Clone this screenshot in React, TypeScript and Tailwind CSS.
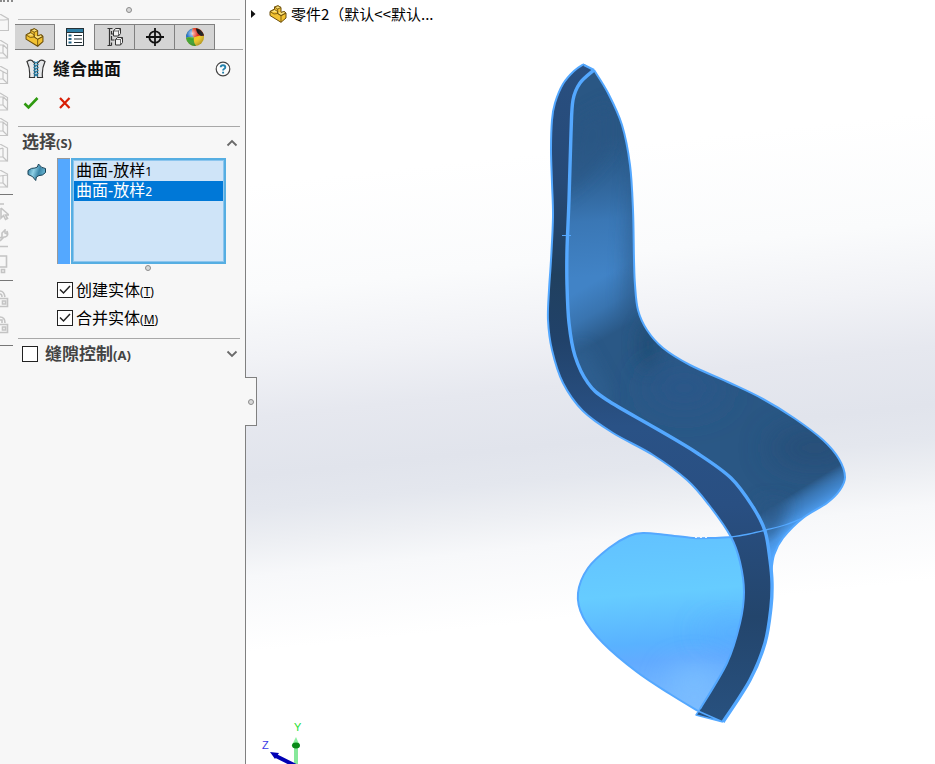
// The part window with the Knit Surface property manager docked on the left:
// clipped view toolbar, property panel, and the 3D graphics area with the chair shell.

import { useState, type ReactNode } from 'react';
import clsx from 'clsx';

type Pt = [number, number];

const ui = "font-['Noto_Sans','Noto_Sans_CJK_SC',sans-serif]";

// Catmull-Rom through the points, written as cubic segments. `join` continues an open path.
function spline(pts: Pt[], join = false) {
  let d = `${join ? 'L' : 'M'}${pts[0][0]} ${pts[0][1]}`;
  for (let i = 0; i < pts.length - 1; i++) {
    const p0 = pts[i - 1] ?? pts[i];
    const p1 = pts[i];
    const p2 = pts[i + 1];
    const p3 = pts[i + 2] ?? p2;
    d += `C${p1[0] + (p2[0] - p0[0]) / 6} ${p1[1] + (p2[1] - p0[1]) / 6} ${p2[0] - (p3[0] - p1[0]) / 6} ${p2[1] - (p3[1] - p1[1]) / 6} ${p2[0]} ${p2[1]}`;
  }
  return d;
}

// Edges of the model, top to bottom
const OUTER: Pt[] = [
  [584, 64], [574, 71], [563, 84], [555, 103], [552, 120], [551, 150], [552, 183], [553, 217], [551, 260], [549, 290],
  [548, 320], [552, 350], [563, 383], [583, 411], [613, 433], [653, 455], [687, 480], [709, 505], [731, 537],
  [740, 562], [744, 592], [740, 623], [727, 663], [700, 709],
];
const INNER: Pt[] = [
  [594, 70], [580, 83], [573, 100], [571, 133], [569, 200], [567, 250], [567, 285], [569, 323], [575, 356], [588, 383],
  [607, 400], [657, 429], [697, 453], [731, 478], [753, 507], [765, 531], [770, 560], [772, 583], [771, 607],
  [765, 643], [750, 680], [723, 722],
];
const BACK: Pt[] = [
  [594, 70], [608, 93], [622, 125], [630, 165], [633, 210], [634, 260], [635, 285], [638, 310], [647, 330], [663, 348],
  [690, 365], [730, 383], [763, 399], [794, 418], [823, 440], [839, 459], [845, 477], [840, 490], [827, 503],
  [803, 518], [783, 538], [774, 555], [771, 575],
];
const LEAF: Pt[] = [
  [732, 537], [713, 538], [693, 538], [667, 535], [643, 533], [629, 536], [609, 548], [588, 568], [578, 593], [583, 617],
  [603, 643], [637, 672], [670, 694], [698, 711],
];

const bandPath = `${spline(OUTER)}L696 715L723 722${spline([...INNER].reverse(), true)}Z`;
const shellPath = `${spline(BACK)}${spline(INNER.slice(0, 18).reverse(), true)}Z`;
const leafPath = `${spline(LEAF)}${spline(OUTER.slice(18).reverse(), true)}Z`;

function PartIcon({ className }: { className?: string }) {
  return (
    <svg viewBox="0 0 18 18" className={className} aria-hidden="true" strokeLinejoin="round" stroke="#6b4d08">
      <path d="M1 6.500 5.500 4 5.500 2 9 .8 12 2.500v5l3.500-1L17 8v5l-5 4.300L1 10.500Z" fill="#f2c232" />
      <path d="M5.500 2 9 .8 12 2.500 8.700 4Z M1 6.500 5.500 4.500 8.700 6.500v2L12 10.500l5-2.500-2-1.500-3 1" fill="#fbe27c" strokeWidth=".8" />
      <path d="M8.700 4v4.500L12 10.800v6.500M1 6.500l4 2.500 3.700-.5M12 10.800 17 8" fill="none" strokeWidth=".8" />
    </svg>
  );
}

function PropertyIcon() {
  return (
    <svg viewBox="0 0 18 18" className="size-[18px]" aria-hidden="true">
      <rect x=".5" y=".5" width="17" height="17" fill="#fff" stroke="#263238" />
      <rect x="1" y="1" width="16" height="3" fill="#2f7fa5" />
      <path d="M1 4.500h16" stroke="#263238" />
      <path d="M2.500 7.500h3M2.500 11h3M2.500 14.500h3" stroke="#1f5f80" strokeWidth="2" />
      <path d="M8 7.500h8M8 11h8M8 14.500h8" stroke="#263238" strokeWidth="1.200" />
    </svg>
  );
}

function ConfigIcon() {
  return (
    <svg viewBox="0 0 18 20" className="h-5 w-[18px]" fill="#f2f2f2" stroke="#333" aria-hidden="true">
      <path d="M1.500 1.500h5M3.500 1.500v17M1.500 18.500h4M5.500 4v3h4M5.500 9v4h3M5.500 15.500v3" fill="none" strokeWidth="1.200" />
      <path d="M7.500 4 9.500 1.500h5v5l-2 2.500h-5Z" />
      <path d="M9.500 12.500 11.500 10.500h5v5l-2 2.500h-5Z" />
      <path d="M7.500 4h5v5M12.500 4l2-2.500M9.500 12.500h5v5.500M14.500 12.500l2-2" fill="none" strokeWidth=".7" />
    </svg>
  );
}

function TargetIcon() {
  return (
    <svg viewBox="0 0 18 18" className="size-[18px]" fill="none" stroke="#111" strokeWidth="1.800" aria-hidden="true">
      <circle cx="9" cy="9" r="5.700" />
      <path d="M9 0v18M0 9h18" />
    </svg>
  );
}

function AppearanceIcon() {
  return (
    <svg viewBox="0 0 20 20" className="size-5" aria-hidden="true">
      <defs>
        <radialGradient id="ballShine" cx=".35" cy=".3" r=".8">
          <stop offset="0" stopColor="#fff" stopOpacity=".75" />
          <stop offset=".4" stopColor="#fff" stopOpacity="0" />
          <stop offset="1" stopColor="#000" stopOpacity=".35" />
        </radialGradient>
      </defs>
      <circle cx="10" cy="10" r="9" fill="#f0c81e" />
      <path d="M1 11A9 9 0 0 1 8 1.200Q5.500 6 9 10.500Q5 9.500 1 11Z" fill="#2270c8" />
      <path d="M8 1.200A9 9 0 0 1 19 9Q13 8 9 10.500Q5.500 6 8 1.200Z" fill="#e03222" />
      <path d="M11 1.200Q17 2 19 8.500L16 9Q11 6 11 1.200Z" fill="#151515" />
      <path d="M1 11Q5 9.500 9 10.500Q8 15 11 19A9 9 0 0 1 1 11Z" fill="#3aa32c" />
      <circle cx="10" cy="10" r="9" fill="url(#ballShine)" />
    </svg>
  );
}

function KnitIcon() {
  return (
    <svg viewBox="0 0 20 20" className="size-5" aria-hidden="true">
      <path d="M1 2.500Q4 .5 6 1.500L8.500 4v14.500H3.500Q4.500 10 1 2.500ZM19 2.500Q16 .5 14 1.500L11.500 4v14.500h5Q15.500 10 19 2.500Z" fill="#e6e8ea" stroke="#333" strokeWidth="1.200" />
      <path d="M8 2.500 12 5.500 8 8.500l4 3-4 3 4 3M12 2.500 8 5.500l4 3-4 3 4 3-4 3" fill="none" stroke="#2b83ab" strokeWidth="1.100" />
    </svg>
  );
}

function SurfaceIcon() {
  return (
    <svg viewBox="0 0 20 20" className="size-5" aria-hidden="true">
      <defs>
        <linearGradient id="sheet" x1="0" y1=".2" x2="1" y2=".5">
          <stop offset="0" stopColor="#2f7d9f" />
          <stop offset=".35" stopColor="#8fd0e6" />
          <stop offset=".65" stopColor="#3a86a8" />
          <stop offset="1" stopColor="#6db8d4" />
        </linearGradient>
      </defs>
      <path d="M1 8.500Q4.500 5.500 8 6 11 6 11.500 2 14.500 6.500 18.500 6.500V10.500Q15.500 14 12 13.500 8.500 14 8.700 18.500 6 13.500 1 12.500Z" fill="url(#sheet)" stroke="#143f55" strokeLinejoin="round" />
    </svg>
  );
}

function Chevron({ up = false }: { up?: boolean }) {
  return (
    <svg viewBox="0 0 12 8" className="h-2 w-3" fill="none" stroke="#6a6a6a" strokeWidth="1.800" aria-hidden="true">
      <path d={up ? 'M1.500 6.500 6 2l4.500 4.500' : 'M1.500 1.500 6 6l4.500-4.500'} />
    </svg>
  );
}

function Grip() {
  return <span className="block size-[6px] rounded-full border border-[#8c8c8c] bg-[#d8d8d8]" />;
}

const CUBES = [
  'M-6 6 0 0 8.500 5v11.500H-6M-6 6h10M8 5.500 4 6',
  'M-6 5H3.500L7.500 9v9H-6M0 0l7.500 4.500V9M0 0-6 5M3 5v8H-6M3 13l4.500 4.500',
  'M-6 4H0l7.500 4v9.500H-6M0 0l7.500 4V9M3 6v7H-6M3 13l4.500 4.500',
  'M-6 5H3.500L7.500 9v9H-6M0 1l7.500 4.500V9M3 5v8H-6M3 13l4.500 4.500',
  'M-6 4H3l4.500 4v9.500H-6M0 0l7.500 4.500V9M3 4v9H-6M3 13l4.500 4.500',
  'M0 0 7.500 4v13H-6M3 4v9H-6M3 13l4.500 4.500M0 5l3-1',
  'M0 0 7.500 4v13H-6M3 6v7H-6M3 13l4.500 4.500M0 6 7 5',
];

const TOOLS = [
  'M0 1h4M1 5v10l2.500-2.500 2 4 2-1-2-3.500h3.500L1 5',
  'M0 9l2-1V4l3-3v3l2 1V2q2 5-2 6H4L0 12M0 17.500h8',
  'M0 1h6.500v11H0M1.500 14.500h3v3h-3Z',
];
const LOCKS = ['M0 1q4 0 5 6M0 4q2 0 2 3M0 8.500h7.500v8H0M2.500 11h3v3h-3Z', 'M0 1q5 0 5 6M0 4h2v3M0 8.500h7.500v8H0M2.500 11h3v3h-3Z'];

function StripButton({ d, label, bold }: { d: string; label: string; bold?: boolean }) {
  return (
    <button type="button" aria-label={label} className="flex h-[26px] w-full items-center">
      <svg viewBox="0 0 9 19" className="h-[19px] w-[9px]" fill="none" stroke="#c4c4c4" strokeWidth={bold ? 1.6 : 1.2} aria-hidden="true">
        <path d={d} />
      </svg>
    </button>
  );
}

function ToolStrip() {
  return (
    <nav aria-label="视图" className="flex w-[15px] shrink-0 flex-col overflow-hidden bg-[#f7f7f7]">
      <div className="mb-2 h-[2px] w-[13px] border-t-2 border-dotted border-[#8a8a8a]" />
      {CUBES.map((d, i) => <StripButton key={i} d={d} label={`视图 ${i + 1}`} />)}
      <hr className="mt-0.5 mb-1 w-[13px] border-[#777]" />
      {TOOLS.map((d, i) => <StripButton key={i} d={d} label={`工具 ${i + 1}`} bold />)}
      <hr className="mt-[3px] mb-[5px] w-[13px] border-[#777]" />
      {LOCKS.map((d, i) => <StripButton key={i} d={d} label={`锁定 ${i + 1}`} bold />)}
      <hr className="mt-[7px] w-[13px] border-[#777]" />
    </nav>
  );
}

function CheckBox({ id, defaultChecked }: { id: string; defaultChecked?: boolean }) {
  return (
    <span className="grid size-4 shrink-0">
      <input id={id} type="checkbox" defaultChecked={defaultChecked}
        className="peer col-start-1 row-start-1 size-4 appearance-none border border-[#222] bg-white" />
      <svg viewBox="0 0 16 16" className="pointer-events-none invisible col-start-1 row-start-1 size-4 peer-checked:visible" fill="none" stroke="#222" strokeWidth="1.500" aria-hidden="true">
        <path d="M3 7.500 6.500 11l6.500-7" />
      </svg>
    </span>
  );
}

function Option({ id, text, children }: { id: string; text: string; children: ReactNode }) {
  return (
    <div className="flex h-7 items-center gap-[3px]">
      <CheckBox id={id} defaultChecked />
      <label htmlFor={id} className="text-base leading-6 text-black">
        {text}<span className="text-xs">({children})</span>
      </label>
    </div>
  );
}

const TABS = [
  { label: '设计树', icon: <PartIcon className="size-[19px]" /> },
  { label: '属性', icon: <PropertyIcon /> },
  { label: '配置', icon: <ConfigIcon /> },
  { label: '尺寸专家', icon: <TargetIcon /> },
  { label: '外观', icon: <AppearanceIcon /> },
];

const SURFACES = ['1', '2'];

function PropertyPanel() {
  const [tab, setTab] = useState(1);
  const [picked, setPicked] = useState(1);

  return (
    <aside className={clsx('flex w-[231px] shrink-0 flex-col border-r border-[#808080] bg-[#f7f7f7]', ui)}>
      <div className="mr-[5px] ml-[3px] flex h-5 items-center justify-center border-b border-[#bcbcbc]"><Grip /></div>

      <div role="tablist" className="mt-1 mr-0.5 flex h-[26px]">
        {TABS.map((t, i) => (
          <button key={t.label} type="button" role="tab" aria-label={t.label} aria-selected={i === tab} onClick={() => setTab(i)}
            className={clsx('flex w-10 items-center justify-center border-r border-[#808080]', i !== tab && 'border-y bg-[#d4d4d4]')}>
            {t.icon}
          </button>
        ))}
        <span className="flex-1 border-b border-[#a6a6a6]" />
      </div>

      <div className="mt-[5px] flex h-7 items-center pr-[14px] pl-[11px]">
        <KnitIcon />
        <h1 className="ml-[7px] flex-1 text-[17px] leading-6 font-bold text-[#111]">缝合曲面</h1>
        <button type="button" aria-label="帮助">
          <svg viewBox="0 0 16 16" className="size-4" fill="none" aria-hidden="true">
            <circle cx="8" cy="8" r="6.800" fill="#fdfdfd" stroke="#444" strokeWidth="1.200" />
            <path d="M5.700 6.300Q5.700 4.200 8 4.200T10.300 6.200Q10.300 7.300 9 8Q8.100 8.500 8.100 9.600M8.100 10.700v1.800" stroke="#2380ab" strokeWidth="1.900" />
          </svg>
        </button>
      </div>

      <div className="mb-1 flex h-[39px] items-center gap-[19px] pl-2">
        <button type="button" aria-label="确定">
          <svg viewBox="0 0 16 14" className="h-3.5 w-4" fill="none" aria-hidden="true">
            <path d="M1.500 7.500 5.500 11.500 14.500 2" stroke="#2f9a10" strokeWidth="2.600" />
          </svg>
        </button>
        <button type="button" aria-label="取消">
          <svg viewBox="0 0 14 14" className="size-3.5" fill="none" aria-hidden="true">
            <path d="M2 2l9.500 10M11.500 2 2 12" stroke="#d81e05" strokeWidth="2.200" />
          </svg>
        </button>
      </div>

      <section className="mr-[5px] ml-[3px] border-t border-[#a8a8a8] pt-0.5">
        <div className="mb-0.5 flex h-[27px] items-center pr-[2px] pl-1">
          <h2 className="flex-1 text-[17px] leading-6 font-bold text-[#444]">选择<span className="text-[13px]">(S)</span></h2>
          <button type="button" aria-label="折叠选择"><Chevron up /></button>
        </div>
        <div className="flex pr-[14px] pl-[9px]">
          <div className="mt-1 w-[30px] shrink-0"><SurfaceIcon /></div>
          <div className="mr-px h-[106px] w-[13px] shrink-0 border-t border-l border-[#999] bg-[#54a8ff]" />
          <ul role="listbox" aria-label="选择" className="h-[106px] min-w-0 flex-1 border-2 border-[#56aee2] bg-[#cfe4f8] py-px outline -outline-offset-3 outline-[#8cc5ee]">
            {SURFACES.map((n, i) => (
              <li key={n} role="option" aria-selected={i === picked} onClick={() => setPicked(i)}
                className={clsx('mx-px h-5 pl-[2px] text-base leading-[18px] whitespace-nowrap', i === picked ? 'bg-[#0078d7] text-white' : 'text-black')}>
                曲面-放样<span className="text-xs">{n}</span>
              </li>
            ))}
          </ul>
        </div>
        <div className="flex h-3 items-start justify-center pt-px pl-[38px]"><Grip /></div>
        <div className="pl-[39px]">
          <Option id="solid" text="创建实体"><u>T</u></Option>
          <Option id="merge" text="合并实体"><u>M</u></Option>
        </div>
      </section>

      <section className="mt-1.5 mr-[5px] ml-[3px] flex h-[31px] items-center border-t border-[#a8a8a8] pr-[2px] pl-1">
        <CheckBox id="gap" />
        <label htmlFor="gap" className="ml-[7px] flex-1 text-[17px] leading-6 font-bold text-[#444]">缝隙控制<span className="text-[13px]">(A)</span></label>
        <button type="button" aria-label="展开缝隙控制"><Chevron /></button>
      </section>
    </aside>
  );
}

function ChairModel() {
  return (
    <svg viewBox="246 32 689 732" className="block w-full" role="img" aria-label="零件2">
      <defs>
        <clipPath id="shellClip"><path d={shellPath} /></clipPath>
        <clipPath id="leafClip"><path d={leafPath} /></clipPath>
        <filter id="soft8" x="-60%" y="-60%" width="220%" height="220%"><feGaussianBlur stdDeviation="8" /></filter>
        <filter id="soft16" x="-100%" y="-150%" width="300%" height="400%"><feGaussianBlur stdDeviation="16" /></filter>
        <linearGradient id="band" gradientUnits="userSpaceOnUse" x1="0" y1="64" x2="0" y2="722">
          <stop offset="0" stopColor="#294f80" />
          <stop offset=".18" stopColor="#264a78" />
          <stop offset=".32" stopColor="#20405f" />
          <stop offset=".42" stopColor="#21426a" />
          <stop offset=".55" stopColor="#2a5286" />
          <stop offset=".67" stopColor="#294f82" />
          <stop offset=".84" stopColor="#23456c" />
          <stop offset="1" stopColor="#28517f" />
        </linearGradient>
        <linearGradient id="backrest" gradientUnits="userSpaceOnUse" x1="590" y1="138" x2="604" y2="275">
          <stop offset="0" stopColor="#2f669a" stopOpacity="0" />
          <stop offset=".25" stopColor="#30659a" stopOpacity=".7" />
          <stop offset=".6" stopColor="#3a77b5" />
          <stop offset="1" stopColor="#4183c6" />
        </linearGradient>
        <linearGradient id="backFold" gradientUnits="userSpaceOnUse" x1="580" y1="290" x2="607" y2="337">
          <stop offset="0" stopColor="#2a5886" stopOpacity="0" />
          <stop offset=".5" stopColor="#2a5886" stopOpacity=".35" />
          <stop offset="1" stopColor="#2a5886" />
        </linearGradient>
        <linearGradient id="lip" gradientUnits="userSpaceOnUse" x1="792" y1="494" x2="808" y2="520">
          <stop offset="0" stopColor="#54a8ff" stopOpacity="0" />
          <stop offset=".5" stopColor="#4792e0" stopOpacity=".7" />
          <stop offset="1" stopColor="#54a8ff" />
        </linearGradient>
        <linearGradient id="leaf" gradientUnits="userSpaceOnUse" x1="650" y1="533" x2="665" y2="715">
          <stop offset="0" stopColor="#62c2ff" />
          <stop offset=".33" stopColor="#66ccff" />
          <stop offset=".6" stopColor="#59b2ff" />
          <stop offset=".7" stopColor="#62abff" />
          <stop offset="1" stopColor="#7cbcff" />
        </linearGradient>
      </defs>

      {/* Lower leaf surface */}
      <path d={leafPath} fill="url(#leaf)" />
      <g clipPath="url(#leafClip)">
        <ellipse cx="735" cy="632" rx="34" ry="8" fill="#54a8ff" opacity=".7" filter="url(#soft16)" />
        <ellipse cx="694" cy="682" rx="26" ry="14" fill="#88caff" opacity=".7" filter="url(#soft16)" />
      </g>

      {/* Backrest and seat */}
      <path d={shellPath} fill="#2a5784" />
      <g clipPath="url(#shellClip)">
        <rect x="540" y="130" width="120" height="240" fill="url(#backrest)" />
        <path d="M575 120 560 200 590 175 612 150V100Z" fill="#2a5784" opacity=".7" filter="url(#soft8)" />
        <path d="M632 150Q624 240 622 320L660 330V150Z" fill="#2a5784" opacity=".5" filter="url(#soft8)" />
        <path d="M540 313 540 380V480H720V200L640 255Z" fill="url(#backFold)" />
        <path d="M560 362 585 345 612 395 600 410Z" fill="#336495" opacity=".6" filter="url(#soft8)" />
        <ellipse cx="648" cy="345" rx="12" ry="26" fill="#244e75" opacity=".8" filter="url(#soft8)" />
        <ellipse cx="684" cy="388" rx="40" ry="20" fill="#2b5689" filter="url(#soft16)" />
        <ellipse cx="815" cy="448" rx="46" ry="18" fill="#254b73" opacity=".8" filter="url(#soft16)" />
        <path d="M740 526 870 446V590H740Z" fill="url(#lip)" />
        <path d="M758 500 790 500 766 555Z" fill="#2a5784" opacity=".8" filter="url(#soft8)" />
      </g>

      <path d={bandPath} fill="url(#band)" />

      <g fill="none" stroke="#54a8ff" strokeLinejoin="round">
        <path d={spline(LEAF)} strokeWidth="2" />
        <path d={spline(OUTER)} strokeWidth="2" />
        <path d={spline(BACK)} strokeWidth="2" />
        <path d={spline(INNER)} strokeWidth="3.400" />
        <path d="M584 65 594 70" strokeWidth="2.500" />
        <path d="M700 709 696 715 723 722M698 711 723 722" strokeWidth="1.500" />
        <path d={spline([[732, 537], [749, 534], [766, 530], [785, 525], [803, 518]])} strokeWidth="1.300" />
        <path d="M562 235.500h9" />
      </g>
      <path d="M695 537.500h12" stroke="#e8f4ff" strokeDasharray="2 3" />

      {/* Orientation triad */}
      <rect x="294" y="744" width="4" height="20" fill="#86e89a" />
      <path d="M291.500 746 296 737l4 9Z" fill="#8cf0a0" />
      <ellipse cx="296" cy="745.500" rx="4" ry="3" fill="#078a17" />
      <path d="M275 755.500 296 766" stroke="#0000b4" strokeWidth="4" />
      <path d="M270 752 279 753 275 759Z" fill="#0000b4" />
      <text x="294" y="731" fontSize="11" fill="#1fe030" className="font-['Liberation_Sans',sans-serif]">Y</text>
      <text x="262" y="749" fontSize="11" fill="#3a3ae6" className="font-['Liberation_Sans',sans-serif]">Z</text>
    </svg>
  );
}

function GraphicsArea() {
  return (
    <main className="relative min-w-0 flex-1 bg-[linear-gradient(174deg,#fff_22%,#fafbfc_35%,#f1f2f6_43%,#e6e8ef_50%,#e1e4ec_57%,#e4e7ee_61%,#edeff3_65%,#f7f8fa_69%,#fff_78%)]">
      <button type="button" aria-label="隐藏面板"
        className="absolute top-[377px] -left-px flex h-[49px] w-3 items-center justify-center border border-l-0 border-[#808080] bg-[#f7f7f7]">
        <Grip />
      </button>
      <header className="flex h-8 items-center pb-1 pl-[5px]">
        <svg viewBox="0 0 5 8" className="h-2 w-[5px]" aria-hidden="true"><path d="M0 0 4.500 4 0 8Z" fill="#111" /></svg>
        <PartIcon className="ml-[13px] size-[18px]" />
        <span className="ml-1 truncate font-['Noto_Sans_CJK_SC',sans-serif] text-[15px] leading-6 text-black">零件2（默认&lt;&lt;默认...</span>
      </header>
      <ChairModel />
    </main>
  );
}

export default function App() {
  return (
    <div className="flex min-h-screen bg-white">
      <ToolStrip />
      <PropertyPanel />
      <GraphicsArea />
    </div>
  );
}
